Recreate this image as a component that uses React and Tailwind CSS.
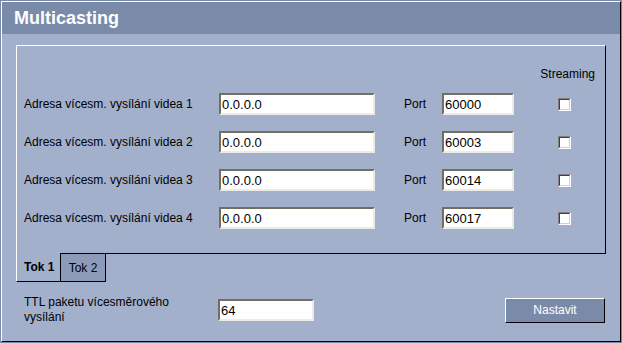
import React from 'react';

const streams = [
  { label: 'Adresa vícesm. vysílání videa 1', addr: '0.0.0.0', port: '60000' },
  { label: 'Adresa vícesm. vysílání videa 2', addr: '0.0.0.0', port: '60003' },
  { label: 'Adresa vícesm. vysílání videa 3', addr: '0.0.0.0', port: '60014' },
  { label: 'Adresa vícesm. vysílání videa 4', addr: '0.0.0.0', port: '60017' },
];

function Field({ value, className }) {
  return (
    <input
      readOnly
      value={value}
      className={`h-[22px] border-2 border-t-[#716f64] border-l-[#716f64] border-b-[#ecebe6] border-r-[#ecebe6] bg-white pl-px text-[13px] text-black outline-none ${className}`}
    />
  );
}

function Check() {
  return (
    <div className="w-[13px] h-[13px] border border-t-[#808080] border-l-[#808080] border-b-white border-r-white">
      <div className="w-full h-full border border-t-[#404040] border-l-[#404040] border-b-[#d4d0c8] border-r-[#d4d0c8] bg-white" />
    </div>
  );
}

export default function App() {
  return (
    <div className="w-[622px] h-[343px] bg-[#7a8baa] p-px font-['Liberation_Sans',Arial,sans-serif] text-black">
      <div className="h-full flex flex-col bg-[#a2b0cc] border border-t-white border-l-white border-r-black border-b-black">
        <div className="h-[32px] bg-[#7a8baa] pl-[12px] flex items-center text-white font-bold text-[18px] leading-[32px]">
          Multicasting
        </div>

        <div className="ml-[14px] mt-[11px] w-[590px] h-[209px] border border-t-white border-l-white border-r-black border-b-black pt-[21px]">
          <div className="flex justify-end pr-[10px] text-[12px] leading-[14px]">Streaming</div>
          <div className="mt-[12px] flex flex-col gap-[16px]">
            {streams.map((s) => (
              <div key={s.label} className="flex items-center h-[22px] pl-[7px] text-[12px]">
                <div className="w-[195px]">{s.label}</div>
                <Field value={s.addr} className="w-[156px]" />
                <div className="ml-[29px] w-[38px]">Port</div>
                <Field value={s.port} className="w-[72px]" />
                <div className="ml-[44px]">
                  <Check />
                </div>
              </div>
            ))}
          </div>
        </div>

        <div className="ml-[14px] -mt-px flex items-start text-[12px] relative">
          <div className="w-[44px] h-[29px] bg-[#a2b0cc] border-l border-l-white border-b border-b-black flex items-center pl-[7px] font-bold">
            Tok 1
          </div>
          <div className="w-[46px] h-[29px] bg-[#8e9bb8] border border-black flex items-center justify-center">
            Tok 2
          </div>
        </div>

        <div className="mt-[13px] pl-[22px] pr-[15px] flex items-center text-[12px]">
          <div className="w-[194px] leading-[15px]">
            TTL paketu vícesměrového
            <br />
            vysílání
          </div>
          <Field value="64" className="w-[96px]" />
          <button className="ml-auto w-[100px] h-[25px] bg-[#7a8baa] text-white text-[12px] border border-t-white border-l-white border-r-black border-b-black">
            Nastavit
          </button>
        </div>
      </div>
    </div>
  );
}
